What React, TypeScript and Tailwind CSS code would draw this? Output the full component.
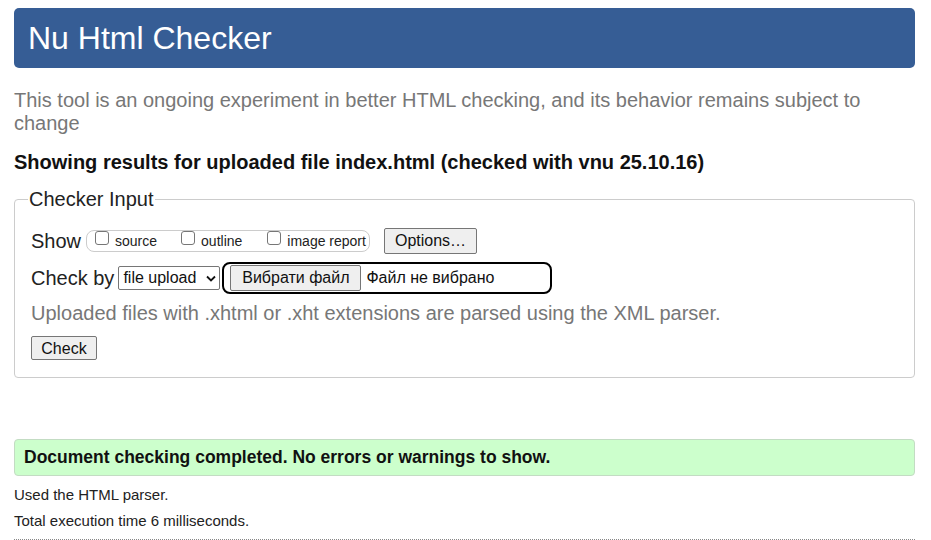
import React from "react";

function Checkbox() {
  return (
    <span className="inline-block w-[14px] h-[14px] border border-[#767676] rounded-[3px] bg-white mr-[6px] translate-y-[-3px]" />
  );
}

export default function App() {
  return (
    <div className="min-h-[540px] bg-white pl-[14px] pr-[16px] pt-[8px] text-[#222]" style={{ fontFamily: '"Liberation Sans", Arial, sans-serif' }}>
      <div className="h-[60px] rounded-[5px] bg-[#365d95] flex items-center px-[14px]">
        <h1 className="text-[32px] leading-none text-white">Nu Html Checker</h1>
      </div>

      <p className="mt-[21px] text-[20px] leading-[23px] text-[#777]">
        This tool is an ongoing experiment in better HTML checking, and its behavior remains subject to change
      </p>

      <p className="mt-[16px] text-[20px] leading-[23px] font-bold text-[#111]">
        Showing results for uploaded file index.html (checked with vnu 25.10.16)
      </p>

      <fieldset className="mt-[14px] border border-[#ccc] rounded-[4px] px-[13px] pb-[16px]">
        <legend className="text-[20px] leading-[23px] px-[1px] text-[#222]">Checker Input</legend>

        <div className="pl-[3px] flex items-center h-[26px] mt-[17px]">
          <span className="text-[20px] leading-[23px]">Show</span>
          <div className="ml-[5px] flex items-center h-[22px] w-[284px] border border-[#ccc] rounded-[8px] pl-[8px] text-[14px]">
            <label className="flex items-center"><Checkbox />source</label>
            <label className="flex items-center ml-[24px]"><Checkbox />outline</label>
            <label className="flex items-center ml-[25px]"><Checkbox />image report</label>
          </div>
          <button className="ml-[14px] h-[26px] w-[93px] border border-[#767676] rounded-[2px] bg-[#efefef] text-[16px] text-[#111]">Options…</button>
        </div>

        <div className="pl-[3px] flex items-center h-[32px] mt-[8px]">
          <span className="text-[20px] leading-[23px]">Check by</span>
          <div className="ml-[4px] h-[24px] w-[102px] border border-[#767676] rounded-[2px] flex items-center pl-[4px] text-[16px] text-[#111]">
            <span>file upload</span>
            <svg className="ml-auto mr-[3px]" width="10" height="7" viewBox="0 0 10 7">
              <path d="M1 1.5 L5 5.5 L9 1.5" fill="none" stroke="#111" strokeWidth="1.8" />
            </svg>
          </div>
          <div className="ml-[2px] h-[32px] w-[330px] border-2 border-black rounded-[8px] flex items-center pl-[6px]">
            <button className="h-[26px] w-[131px] border border-[#767676] rounded-[2px] bg-[#efefef] text-[16px] text-[#111]">Вибрати файл</button>
            <span className="ml-[5px] text-[16px] text-[#111]">Файл не вибрано</span>
          </div>
        </div>

        <p className="pl-[3px] mt-[8px] text-[20px] leading-[23px] text-[#777]">
          Uploaded files with .xhtml or .xht extensions are parsed using the XML parser.
        </p>

        <div className="pl-[3px] mt-[11px]">
          <button className="h-[24px] w-[66px] border border-[#767676] rounded-[2px] bg-[#efefef] text-[16px] text-[#111]">Check</button>
        </div>
      </fieldset>

      <div className="mt-[61px] h-[37px] bg-[#ccffcc] border border-[#c3dcc3] rounded-[4px] flex items-center px-[9px]">
        <span className="text-[17.5px] font-bold text-[#111]">Document checking completed. No errors or warnings to show.</span>
      </div>

      <p className="mt-[10px] text-[15px] leading-[18px] text-[#222]">Used the HTML parser.</p>
      <p className="mt-[8px] text-[15px] leading-[18px] text-[#222]">Total execution time 6 milliseconds.</p>
      <div className="mt-[9px] border-t border-dotted border-[#888]" />
    </div>
  );
}
